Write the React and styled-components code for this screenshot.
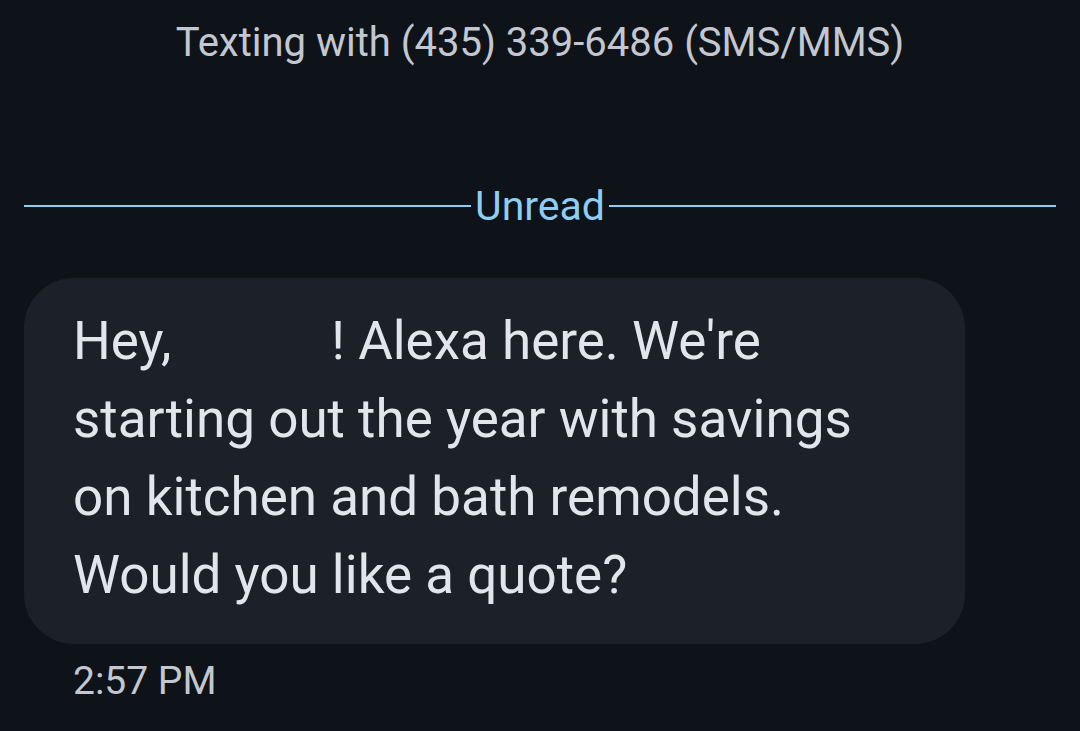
import React from "react";
import styled, { createGlobalStyle } from "styled-components";

const Global = createGlobalStyle`
  html, body {
    margin: 0;
    padding: 0;
    background: #0e131a;
  }
  body {
    font-family: Roboto, "Noto Sans", "Liberation Sans", sans-serif;
  }
`;

const Screen = styled.div`
  width: 1080px;
  height: 731px;
  background: #0e131a;
  display: flex;
  flex-direction: column;
  padding: 0 24px;
  box-sizing: border-box;
  overflow: hidden;
`;

const Header = styled.div`
  text-align: center;
  color: #c4c7cf;
  font-size: 40px;
  line-height: 48px;
  padding-top: 19px;
`;

const Divider = styled.div`
  display: flex;
  align-items: center;
  margin-top: 115px;
  color: #8fcdf1;
  font-size: 41px;
  line-height: 48px;
  &::before,
  &::after {
    content: "";
    flex: 1;
    height: 2px;
    background: #8fcdf1;
  }
  span {
    padding: 0 4px;
  }
`;

const Bubble = styled.div`
  margin-top: 48px;
  width: 941px;
  box-sizing: border-box;
  background: #1c2029;
  border-radius: 50px;
  padding: 24px 40px 30px 49px;
  color: #e3e5ec;
  font-size: 53px;
  line-height: 78px;
  white-space: nowrap;
`;

const Redacted = styled.span`
  display: inline-block;
  width: ${(p) => p.$w}px;
`;

const Time = styled.div`
  margin-top: 13px;
  padding-left: 49px;
  color: #c4c7cf;
  font-size: 39px;
  line-height: 48px;
`;

export default function App() {
  return (
    <Screen>
      <Global />
      <Header>Texting with (435) 339-6486 (SMS/MMS)</Header>
      <Divider>
        <span>Unread</span>
      </Divider>
      <Bubble>
        Hey,<Redacted $w={160} />! Alexa here. We're
        <br />
        starting out the year with savings
        <br />
        on kitchen and bath remodels.
        <br />
        Would you like a quote?
      </Bubble>
      <Time>2:57 PM</Time>
    </Screen>
  );
}
